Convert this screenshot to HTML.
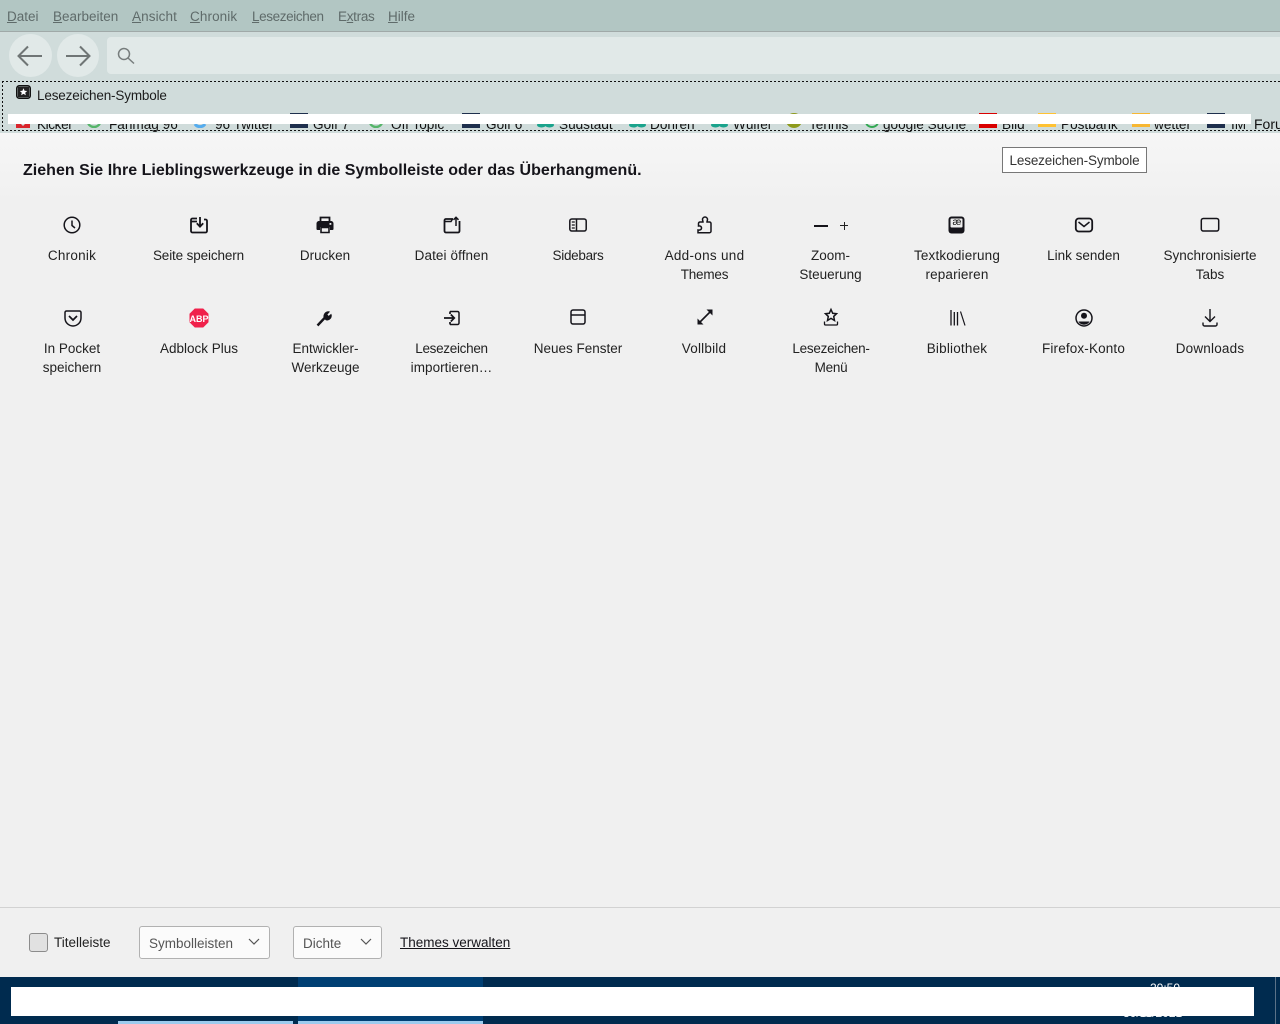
<!DOCTYPE html>
<html lang="de"><head><meta charset="utf-8"><title>Anpassen</title>
<style>
html,body{margin:0;padding:0}
body{width:1280px;height:1024px;position:relative;overflow:hidden;background:#f0f0f0;font-family:"Liberation Sans",sans-serif;font-size:13.5px;color:#15141a}
.a{position:absolute;white-space:nowrap}
.menu{top:8px;color:#5f6b6a;font-size:13.5px;line-height:17px}
.menu u{text-decoration:underline}
.bm{top:116px;font-size:13.6px;line-height:17px;color:#111}
.fav{position:absolute;top:113px;width:14px;height:15px}
.lbl{position:absolute;width:124px;text-align:center;line-height:19px;color:#222}
svg.i{position:absolute;width:18px;height:18px;overflow:visible;fill:none;stroke:#15141a;stroke-width:1.5}
.dh{position:absolute;left:2px;width:1278px;height:1px;background:repeating-linear-gradient(90deg,#111 0 2px,transparent 2px 4px)}
.dv{position:absolute;width:1px;background:repeating-linear-gradient(180deg,#111 0 2px,transparent 2px 4px)}
</style></head><body>

<div class="a" style="left:0;top:0;width:1280px;height:31px;background:#b2c6c3"></div>
<div class="a" style="left:0;top:31px;width:1280px;height:1px;background:#a0a9a8"></div>
<div class="a" style="left:0;top:32px;width:1280px;height:101px;background:#d0dcdb"></div>
<div class="a menu" style="left:7px"><u>D</u>atei</div>
<div class="a menu" style="left:53px"><u>B</u>earbeiten</div>
<div class="a menu" style="left:132px;letter-spacing:.1px"><u>A</u>nsicht</div>
<div class="a menu" style="left:190px;letter-spacing:.1px"><u>C</u>hronik</div>
<div class="a menu" style="left:252px;letter-spacing:-.38px"><u>L</u>esezeichen</div>
<div class="a menu" style="left:338px;letter-spacing:-.3px">E<u>x</u>tras</div>
<div class="a menu" style="left:388px"><u>H</u>ilfe</div>

<div class="a" style="left:9px;top:34px;width:43px;height:43px;border-radius:50%;background:#e1e9e8"></div>
<div class="a" style="left:57px;top:34px;width:42px;height:43px;border-radius:50%;background:#e1e9e8"></div>
<svg class="a" style="left:9px;top:34px" width="90" height="43" fill="none" stroke="#6f7575" stroke-width="2"><path d="M33 22H10M19 12.500 9.500 22 19 31.500"/><path d="M57 22H80M71 12.500 80.500 22 71 31.500"/></svg>
<div class="a" style="left:107px;top:37px;width:1173px;height:37px;background:#e1e9e8;border-radius:4px 0 0 4px"></div>
<svg class="a" style="left:116px;top:46px" width="20" height="20" fill="none" stroke="#777d7d" stroke-width="1.500"><circle cx="8" cy="8" r="5.500"/><path d="M12 12 18 17.500"/></svg>

<div class="dh" style="top:81px"></div>
<div class="dh" style="top:130px"></div>
<div class="dv" style="left:2px;top:81px;height:50px"></div>
<svg class="a" style="left:16px;top:85px" width="15" height="14"><rect x=".8" y=".8" width="13.400" height="12.400" rx="2.500" fill="#d0dcdb" stroke="#111" stroke-width="1.600"/><rect x="2" y="2" width="11" height="10" fill="#222"/><path d="M7.500 3.300 8.600 5.800 11.200 6 9.200 7.700 9.900 10.300 7.500 8.900 5.100 10.300 5.800 7.700 3.800 6 6.400 5.800Z" fill="#fff"/></svg>
<div class="a" style="left:37px;top:87px;font-size:13.5px;line-height:17px;color:#1c1c1c;letter-spacing:-.16px">Lesezeichen-Symbole</div>

<div class="fav" style="left:16px;width:13px"><svg width="14" height="15"><path d="M0 11h5l2 2 2-2h5v4H0Z" fill="#d9252c"/></svg></div>
<div class="fav" style="left:86px"><svg width="16" height="15" fill="none" stroke="#56b56a" stroke-width="2.400"><path d="M2 10a6.500 6.500 0 0 0 12 0"/></svg></div>
<div class="fav" style="left:192px"><svg width="16" height="15" fill="none" stroke="#55acee" stroke-width="3"><path d="M3 11a6 6 0 0 0 10 0"/></svg></div>
<div class="fav" style="left:290px;width:18px;height:15px;top:113px;background:#1e2f4d"></div>
<div class="fav" style="left:368px"><svg width="16" height="15" fill="none" stroke="#56b56a" stroke-width="2.400"><path d="M2 10a6.500 6.500 0 0 0 12 0"/></svg></div>
<div class="fav" style="left:462px;width:18px;height:15px;background:#1e2f4d"></div>
<div class="fav" style="left:537px;width:17px"><svg width="17" height="15" fill="#1aa38c"><ellipse cx="4.500" cy="12" rx="4.500" ry="2.500"/><ellipse cx="12.500" cy="12" rx="4.500" ry="2.500"/></svg></div>
<div class="fav" style="left:629px;width:17px"><svg width="17" height="15" fill="#1aa38c"><ellipse cx="4.500" cy="12" rx="4.500" ry="2.500"/><ellipse cx="12.500" cy="12" rx="4.500" ry="2.500"/></svg></div>
<div class="fav" style="left:711px;width:17px"><svg width="17" height="15" fill="#1aa38c"><ellipse cx="4.500" cy="12" rx="4.500" ry="2.500"/><ellipse cx="12.500" cy="12" rx="4.500" ry="2.500"/></svg></div>
<div class="fav" style="left:786px;width:16px;border-radius:50%;background:#8d9a1c"></div>
<div class="fav" style="left:864px"><svg width="16" height="15" fill="none" stroke="#33a853" stroke-width="2"><path d="M2 10a6.500 6.500 0 0 0 12 0"/></svg></div>
<div class="fav" style="left:979px;width:18px;height:15px;background:#d90000"></div>
<div class="fav" style="left:1038px;width:18px;height:14px;background:#ffc233"></div>
<div class="fav" style="left:1132px;width:18px;height:14px;background:#f7b733"></div>
<div class="fav" style="left:1207px;width:18px;height:15px;background:#1e2f4d"></div>

<div class="a bm" style="left:37px;letter-spacing:-.4px">Kicker</div>
<div class="a bm" style="left:109px">Fanmag 96</div>
<div class="a bm" style="left:215px">96 Twitter</div>
<div class="a bm" style="left:313px">Golf 7</div>
<div class="a bm" style="left:391px">Off Topic</div>
<div class="a bm" style="left:486px">Golf 6</div>
<div class="a bm" style="left:559px">Südstadt</div>
<div class="a bm" style="left:650px">Döhren</div>
<div class="a bm" style="left:733px">Wülfel</div>
<div class="a bm" style="left:809px">Tennis</div>
<div class="a bm" style="left:883px">google Suche</div>
<div class="a bm" style="left:1002px">Bild</div>
<div class="a bm" style="left:1061px">Postbank</div>
<div class="a bm" style="left:1154px">wetter</div>
<div class="a bm" style="left:1231px">IM</div>
<div class="a" style="left:8px;top:114px;width:1243px;height:10px;background:#fff"></div>
<div class="a bm" style="left:1254px;font-size:14px">Forum</div>

<div class="a" style="left:0;top:133px;width:1280px;height:70px;background:linear-gradient(#f6f6f6,#f0f0f0)"></div>
<div class="a" style="left:23px;top:161px;font-size:16px;font-weight:bold;line-height:20px;color:#15141a;letter-spacing:.02px">Ziehen Sie Ihre Lieblingswerkzeuge in die Symbolleiste oder das Überhangmenü.</div>
<div class="a" style="left:1002px;top:147px;width:143px;height:24px;border:1px solid #777;background:#fff;text-align:center;line-height:25px;font-size:13.5px;color:#333;letter-spacing:-.15px">Lesezeichen-Symbole</div>

<!-- Row 1 icons -->
<svg class="i" style="left:63px;top:216px" viewBox="0 0 18 18"><circle cx="9" cy="9" r="7.800"/><path d="M9 4.500V9.500L12 12"/></svg>
<svg class="i" style="left:190px;top:216px" viewBox="0 0 18 18"><path d="M7 2.500H2.500a1.500 1.500 0 0 0-1.500 1.500V15a1.500 1.500 0 0 0 1.500 1.500h13a1.500 1.500 0 0 0 1.500-1.500V5a1.500 1.500 0 0 0-1.500-1.500H14" stroke-width="1.800"/><path d="M1.500 5.500H7M10 1V10M6.800 7.300 10 10.700 13.200 7.300" stroke-width="1.800"/></svg>
<svg class="i" style="left:316px;top:216px" viewBox="0 0 18 18"><path d="M4.500 1.500h9v5h-9Z" fill="none" stroke-width="1.800"/><path d="M3 5h12a2.500 2.500 0 0 1 2.500 2.500V13a1 1 0 0 1-1 1H14v-3H4v3H1.500a1 1 0 0 1-1-1V7.500A2.500 2.500 0 0 1 3 5Z" fill="#15141a" stroke="none"/><path d="M5 11.500h8v5H5Z" stroke-width="1.600"/><rect x="13.500" y="7" width="1.800" height="1.800" fill="#f0f0f0" stroke="none"/></svg>
<svg class="i" style="left:443px;top:216px" viewBox="0 0 18 18"><path d="M10 3H3a1.500 1.500 0 0 0-1.500 1.500V15A1.500 1.500 0 0 0 3 16.500h12a1.500 1.500 0 0 0 1.500-1.500V5" stroke-width="1.800"/><path d="M1.500 5.500H8L9.500 3M13 10V1.500M10.500 3.800 13 1.300 15.500 3.800"/></svg>
<svg class="i" style="left:569px;top:216px" viewBox="0 0 18 18"><rect x=".8" y="3" width="16.400" height="12" rx="2"/><path d="M7.500 3V15"/><path d="M2.800 6h3M2.800 9h3M2.800 12h3" stroke-width="1.300"/></svg>
<svg class="i" style="left:696px;top:216px" viewBox="0 0 18 18"><path d="M2 16.700h11.500a1.500 1.500 0 0 0 1.500-1.500V7.500a1.500 1.500 0 0 0-1.500-1.500H11c0-1 .5-1.500.5-2.500a2.500 2.500 0 0 0-5 0C6.500 4.500 7 5 7 6H4a1.500 1.500 0 0 0-1.500 1.500V10c1-.2 3 0 3 2s-2 2.200-3.500 2Z" stroke-width="1.500"/></svg>
<div class="a" style="left:814px;top:225px;width:14px;height:1.500px;background:#15141a"></div>
<div class="a" style="left:840px;top:225px;width:8px;height:1px;background:#222"></div>
<div class="a" style="left:844px;top:221.500px;width:1px;height:8px;background:#222"></div>
<svg class="i" style="left:948px;top:216px" viewBox="0 0 18 18"><rect x=".5" y=".5" width="16" height="17" rx="3" fill="#15141a" stroke="none"/><rect x="2.500" y="2.500" width="12" height="9" rx="1" fill="#eee" stroke="none"/></svg>
<div class="a" style="left:951px;top:217px;width:12px;text-align:center;font-size:10px;line-height:11px;color:#111">æ</div>
<svg class="i" style="left:1075px;top:216px" viewBox="0 0 18 18"><rect x=".8" y="2.500" width="16.400" height="13" rx="3" stroke-width="1.800"/><path d="M3.500 6 9 10.500 14.500 6" stroke-width="1.500"/></svg>
<svg class="i" style="left:1201px;top:216px" viewBox="0 0 18 18"><rect x=".3" y="2.500" width="17.400" height="12.500" rx="2" stroke-width="1.500"/></svg>

<!-- Row 2 icons -->
<svg class="i" style="left:64px;top:309px" viewBox="0 0 18 18"><path d="M2.500 2h13A1.500 1.500 0 0 1 17 3.500V9a8 8 0 0 1-16 0V3.500A1.500 1.500 0 0 1 2.500 2Z"/><path d="M5 7 9 11 13 7" stroke-width="1.700"/></svg>
<svg class="a" style="left:189px;top:308px" width="20" height="20"><path d="M6 1h8l5 5v8l-5 5H6l-5-5V6Z" fill="#f0214b" stroke="#f0214b"/><text x="10" y="14" text-anchor="middle" font-family="Liberation Sans" font-weight="bold" font-size="9" fill="#fff">ABP</text></svg>
<svg class="a" style="left:316px;top:309px" width="18" height="18"><path d="M1.500 16.500 9.500 8" stroke="#15141a" stroke-width="2.400" fill="none"/><path d="M8 9c-1-3 1-6.500 4.500-6.500l1 .3-2.500 2.700 1.500 1.800 2.600-2.100.4 1.300c0 3.500-3.500 5.300-5.500 4.500Z" fill="#15141a" stroke="#15141a" stroke-width=".6"/></svg>
<svg class="i" style="left:443px;top:309px" viewBox="0 0 18 18"><path d="M7 2.500h7.500A1.500 1.500 0 0 1 16 4v10a1.500 1.500 0 0 1-1.500 1.500H7" stroke-width="1.500"/><path d="M7 5V2.500M7 15.500V13M1 9H11M7.800 5.500 11.300 9 7.800 12.500" stroke-width="1.700"/></svg>
<svg class="i" style="left:569px;top:308px" viewBox="0 0 18 18"><rect x="2" y="2" width="14" height="14" rx="2"/><path d="M2 7H16"/></svg>
<svg class="i" style="left:696px;top:308px" viewBox="0 0 18 18"><path d="M3 15 15 3" stroke-width="1.600"/><path d="M1.500 10.500v6h6ZM16.500 7.500v-6h-6Z" fill="#15141a" stroke="none"/></svg>
<svg class="i" style="left:822px;top:309px" viewBox="0 0 18 18"><path d="M9 .5 10.700 4.300 14.500 4.700 11.700 7.400 12.500 11.500 9 9.400 5.500 11.500 6.300 7.400 3.500 4.700 7.300 4.300Z" stroke-width="1.500"/><path d="M2.500 12.500V15A1 1 0 0 0 3.500 16H14.500A1 1 0 0 0 15.500 15V12.500" stroke-width="1.300"/></svg>
<svg class="i" style="left:948px;top:309px" viewBox="0 0 18 18"><path d="M3 1V16.500M6.300 3V16.500M9.500 3V16.500" stroke-width="1.300"/><path d="M12.500 2.500 17 16.500" stroke-width="1.200"/></svg>
<svg class="i" style="left:1075px;top:309px" viewBox="0 0 18 18"><circle cx="9" cy="9" r="8"/><circle cx="9" cy="6.800" r="3" fill="#15141a" stroke="none"/><path d="M3.500 12.500h11c-1 2-3 3.200-5.500 3.200s-4.500-1.200-5.500-3.200Z" fill="#15141a" stroke="none"/></svg>
<svg class="i" style="left:1201px;top:309px" viewBox="0 0 18 18"><path d="M9 0V12M4 7.500 9 12.500 14 7.500" stroke-width="1.400"/><path d="M2 13.500V15.500A1.500 1.500 0 0 0 3.500 17H14.500A1.500 1.500 0 0 0 16 15.500V13.500" stroke-width="1.400"/></svg>

<!-- Labels row 1 -->
<div class="lbl" style="left:10px;top:246px;letter-spacing:.25px">Chronik</div>
<div class="lbl" style="left:136.500px;top:246px;letter-spacing:-.13px">Seite speichern</div>
<div class="lbl" style="left:263px;top:246px">Drucken</div>
<div class="lbl" style="left:389.500px;top:246px;letter-spacing:.1px">Datei öffnen</div>
<div class="lbl" style="left:516px;top:246px;letter-spacing:-.3px">Sidebars</div>
<div class="lbl" style="left:642.500px;top:246px;letter-spacing:.3px">Add-ons und<br><span style="letter-spacing:-.2px">Themes</span></div>
<div class="lbl" style="left:768.500px;top:246px">Zoom-<br>Steuerung</div>
<div class="lbl" style="left:895px;top:246px;letter-spacing:.15px">Textkodierung<br>reparieren</div>
<div class="lbl" style="left:1021.500px;top:246px">Link senden</div>
<div class="lbl" style="left:1148px;top:246px">Synchronisierte<br>Tabs</div>
<!-- Labels row 2 -->
<div class="lbl" style="left:10px;top:339px">In Pocket<br>speichern</div>
<div class="lbl" style="left:137px;top:339px">Adblock Plus</div>
<div class="lbl" style="left:263.500px;top:339px">Entwickler-<br>Werkzeuge</div>
<div class="lbl" style="left:389.500px;top:339px;letter-spacing:-.3px">Lesezeichen<br><span style="letter-spacing:.05px">importieren…</span></div>
<div class="lbl" style="left:516px;top:339px">Neues Fenster</div>
<div class="lbl" style="left:642px;top:339px;letter-spacing:.2px">Vollbild</div>
<div class="lbl" style="left:769px;top:339px;letter-spacing:-.25px">Lesezeichen-<br>Menü</div>
<div class="lbl" style="left:895px;top:339px;letter-spacing:.2px">Bibliothek</div>
<div class="lbl" style="left:1021.500px;top:339px;letter-spacing:.15px">Firefox-Konto</div>
<div class="lbl" style="left:1148px;top:339px;letter-spacing:.2px">Downloads</div>

<!-- Footer -->
<div class="a" style="left:0;top:907px;width:1280px;height:1px;background:#d2d2d2"></div>
<div class="a" style="left:29px;top:933px;width:17px;height:17px;border:1px solid #8c8c8c;border-radius:3px;background:#e1e1e1"></div>
<div class="a" style="left:54px;top:934px;line-height:18px;color:#222">Titelleiste</div>
<div class="a" style="left:139px;top:926px;width:129px;height:31px;border:1px solid #b1b1b1;border-radius:3px;background:#fbfbfb"></div>
<div class="a" style="left:149px;top:935px;line-height:18px;color:#555">Symbolleisten</div>
<svg class="a" style="left:248px;top:937px" width="12" height="9" fill="none" stroke="#555" stroke-width="1.200"><path d="M1 2 6 7 11 2"/></svg>
<div class="a" style="left:293px;top:926px;width:87px;height:31px;border:1px solid #b1b1b1;border-radius:3px;background:#fbfbfb"></div>
<div class="a" style="left:303px;top:935px;line-height:18px;color:#555">Dichte</div>
<svg class="a" style="left:360px;top:937px" width="12" height="9" fill="none" stroke="#555" stroke-width="1.200"><path d="M1 2 6 7 11 2"/></svg>
<div class="a" style="left:400px;top:934px;line-height:18px;color:#15141a;text-decoration:underline">Themes verwalten</div>

<!-- Taskbar -->
<div class="a" style="left:0;top:977px;width:1280px;height:47px;background:#002b4f"></div>
<div class="a" style="left:298px;top:977px;width:185px;height:47px;background:#003f73"></div>
<div class="a" style="left:118px;top:1021px;width:175px;height:3px;background:#9ccbee"></div>
<div class="a" style="left:298px;top:1021px;width:185px;height:3px;background:#9ccbee"></div>
<div class="a" style="left:1275px;top:977px;width:1px;height:47px;background:#5a7288"></div>
<div class="a" style="left:1150px;top:981px;font-size:12px;line-height:14px;color:#fff">20:50</div>
<div class="a" style="left:1123px;top:1006px;font-size:12px;line-height:14px;color:#fff">30/11/2021</div>
<div class="a" style="left:11px;top:987px;width:1243px;height:29px;background:#fff"></div>

</body></html>
